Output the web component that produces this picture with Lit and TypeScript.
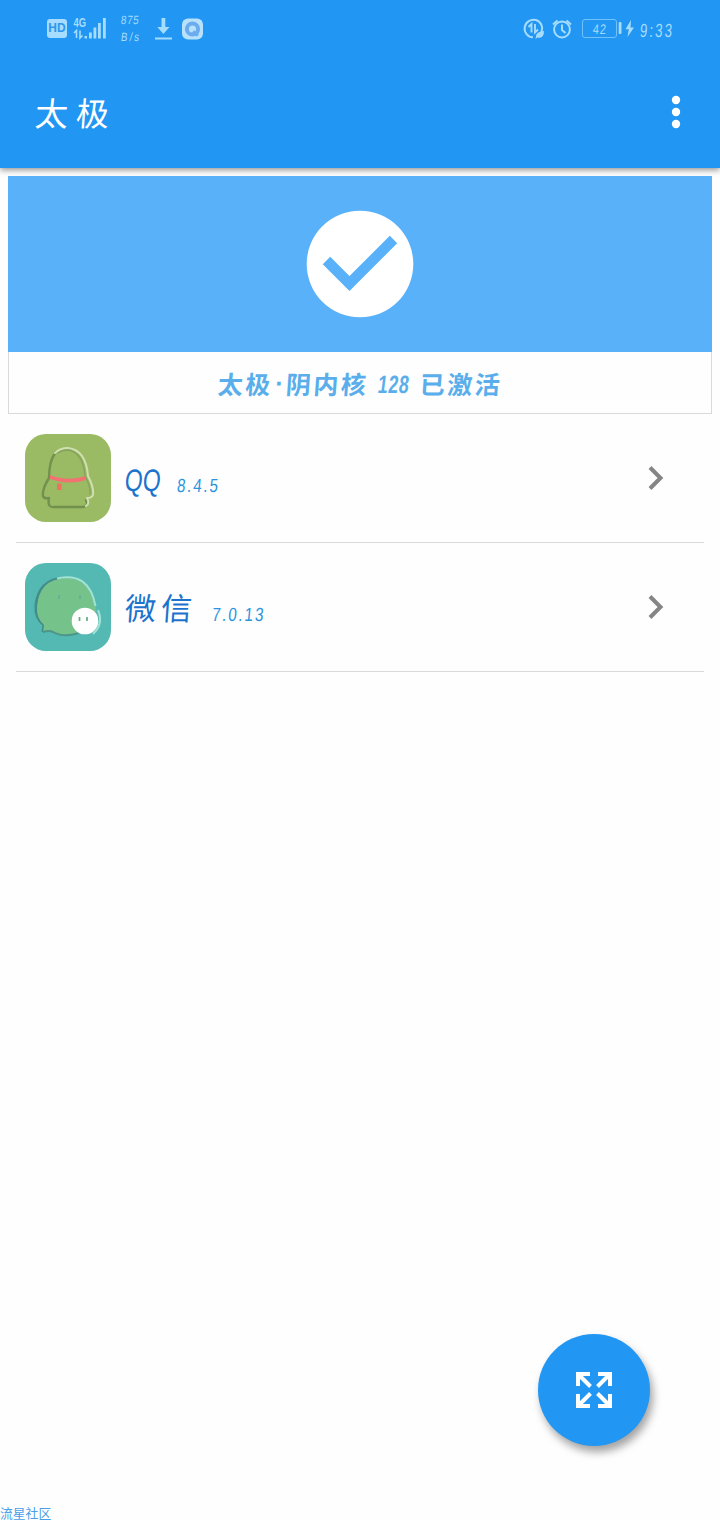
import { LitElement, html, css, svg } from "lit";
import { customElement, property } from "lit/decorators.js";

const cjk = css`"Liberation Sans", "Noto Sans CJK SC", sans-serif`;

@customElement("status-bar")
class StatusBar extends LitElement {
  static styles = css`
    :host { display: flex; justify-content: space-between; height: 56px; padding: 0 46px 0 47px;
      box-sizing: border-box; color: #a6dcfd; font-family: ${cjk}; }
    svg { display: block; flex: none; }
    .side { display: flex; align-items: flex-start; }
    .left { padding-top: 14px; }
    .right { padding-top: 16px; }
    .hd { width: 20px; height: 19px; margin: 5px 6px 0 0; border-radius: 3px; background: #a6dcfd; color: #2f97ee;
      display: flex; align-items: center; justify-content: center; font-size: 12px; font-weight: 700; line-height: 19px; }
    .gen { font-size: 12px; font-weight: 700; }
    .rate { width: 34px; box-sizing: border-box; padding-left: 14px; font-size: 12px; line-height: 17px;
      white-space: nowrap; margin-top: -2px; height: 34px; }
    .rate span { display: block; transform-origin: 0 50%; transform: scaleX(.82) skewX(-8deg); letter-spacing: .7px; }
    .rate span + span { letter-spacing: 2.4px; }
    .pct { width: 35px; height: 19px; margin: 3px 0 0 9px; box-sizing: border-box; border: 1.5px solid #72c2fa;
      border-radius: 3px; display: flex; align-items: center; justify-content: center; font-size: 14px; line-height: 16px; }
    .pct span { transform: scaleX(.78) skewX(-6deg); letter-spacing: 1px; }
    .time { width: 34px; margin-left: 5px; font-size: 19px; line-height: 29px; white-space: nowrap; }
    .time span { display: block; transform-origin: 0 50%; transform: scaleX(.7) skewX(-6deg); letter-spacing: 3px; }
  `;
  render() {
    return html`
      <div class="side left">
        <div class="hd">HD</div>
        <svg width="34" height="28" viewBox="26 0 34 28" fill="#a6dcfd">
          <text class="gen" x="26.500" y="12.500" textLength="12.500" lengthAdjust="spacingAndGlyphs">4G</text>
          <path fill="none" stroke="#a6dcfd" stroke-width="1.600" d="M27 19l2.500-2.500V24M33 16.500V24l2.500-2.500"/>
          <path d="M37.500 22h2.500v2.500h-2.500zM42 18.500h2.800v6H42zM46.500 13.500h2.800v11h-2.800zM51 9h2.800v15.500H51zM56 4h2.800v20.500H56z"/>
        </svg>
        <div class="rate"><span>875</span><span>B/s</span></div>
        <svg width="64" height="28" viewBox="0 0 64 28">
          <path fill="#a6dcfd" d="M20.500 4h3.800v9h4.200l-6.100 7-6.100-7h4.200zM14 23.500h17v2H14z"/>
          <rect x="41" y="4.500" width="21" height="21" rx="6" fill="#b8e2fc"/>
          <circle cx="51.500" cy="15" r="5.600" fill="none" stroke="#6bacee" stroke-width="4"/>
          <path d="M52 17.500l5 4" stroke="#6bacee" stroke-width="3"/>
        </svg>
      </div>
      <div class="side right">
        <svg width="50" height="26" viewBox="0 0 50 26" fill="none" stroke="#a6dcfd" stroke-width="2">
          <path d="M18.500 16A8.800 8.800 0 1 0 10 21.300"/>
          <path stroke-width="1.900" d="M5.500 11l3-3v8.500M12 8v8.500l3-3"/>
          <path fill="#a6dcfd" stroke="none" d="M13 20.500q0-5 8-5.500 0 8-6.500 6.500l-2 1.500z"/>
          <circle cx="39" cy="13.500" r="7.900"/>
          <path d="M39 8.500v5.500l3.500 3M30 8.500l4.500-4M48 8.500l-4.500-4"/>
        </svg>
        <div class="pct"><span>42</span></div>
        <svg width="18" height="26" viewBox="0 0 18 26" fill="#a6dcfd">
          <rect x="1.700" y="6" width="2.800" height="12" rx="1"/>
          <path d="M14 4L8.500 13.200h3.300L10.500 21 17 11.500h-3.500z"/>
        </svg>
        <div class="time"><span>9:33</span></div>
      </div>`;
  }
}

@customElement("app-row")
class AppRow extends LitElement {
  @property() name = "";
  @property() version = "";
  @property() icon = "";
  static styles = css`
    :host { display: flex; align-items: center; height: 129px; margin: 0 16px; padding: 0 37px 0 9px;
      box-sizing: border-box; border-bottom: 1px solid #dadada; font-family: ${cjk}; }
    svg { display: block; flex: none; }
    .soft { filter: blur(.6px); }
    .name { margin-left: 14px; white-space: nowrap; color: #1c73cd; height: 40px; line-height: 40px; }
    .latin { width: 52px; font-size: 31px; margin-top: 6px; }
    .hanzi { width: 87px; font-size: 31px; letter-spacing: 5px; font-weight: 400; margin-top: 5px; }
    .name span, .version span { display: inline-block; transform-origin: 0 50%; }
    .latin span { transform: scaleX(.74) skewX(-7deg); }
    .hanzi span { transform: skewX(-4deg); }
    .version { flex: 1; font-size: 19px; line-height: 24px; color: #2a94e0; margin-top: 15px; white-space: nowrap; }
    .version span { transform: scaleX(.8) skewX(-7deg); letter-spacing: 2.3px; }
  `;
  qq() {
    return svg`
      <rect width="86" height="88" rx="21" fill="#9aba64"/>
      <g class="soft" fill="none" stroke-linecap="round" stroke-linejoin="round">
        <path d="M31 18Q24 26 24 44Q17 55 18 62Q19 65 24 64Q22 74 29 73H57Q64 73 61 66" stroke="#71914e" stroke-width="2.400"/>
        <path d="M30 19Q35 14 43 14Q61 16 63 42Q69 53 68 61Q67 64 62 64Q65 70 61 72" stroke="#cfdfaf" stroke-width="2"/>
        <path d="M33 19Q37 16 43 16Q58 18 60 42Q66 53 65 60" stroke="#84a25e" stroke-width="1.300"/>
      </g>
      <path d="M25 41Q43 48 61 42V46Q43 51.500 25 45z" fill="#f27171"/>
      <path d="M32 49.500h4.500v6.500h-4.500z" fill="#ee7164"/>`;
  }
  wechat() {
    return svg`
      <rect width="86" height="88" rx="21" fill="#54b9b2"/>
      <path class="soft" d="M18 69L19 62Q10 55 11 42Q14 17 38 15" fill="none" stroke="#438c88" stroke-width="3"/>
      <path d="M18 69L19 62Q11 55 12 44Q14 16 41 15Q69 16 71 46Q69 72 41 72Q31 73 28 69Q23 68 18 69z" fill="#75c28a"/>
      <g class="soft" fill="none">
        <path d="M18 69Q24 67 28 69Q38 75 54 70" stroke="#4c958a" stroke-width="2"/>
        <path d="M32 15.500Q64 8 70.500 43" stroke="#a0e2d6" stroke-width="2"/>
        <path d="M73 47Q79 61 68 71" stroke="#a0e2d6" stroke-width="2"/>
      </g>
      <circle cx="60" cy="58" r="13.300" fill="#fff"/>
      <path d="M54.500 54v4M62 54v4" stroke="#5fae80" stroke-width="1.700"/>
      <path d="M34 32v4M55 32v4" stroke="#60af92" stroke-width="1.500"/>`;
  }
  render() {
    return html`
      <svg width="86" height="88" viewBox="0 0 86 88">${this.icon === "qq" ? this.qq() : this.wechat()}</svg>
      <div class="name ${this.icon === "qq" ? "latin" : "hanzi"}"><span>${this.name}</span></div>
      <div class="version"><span>${this.version}</span></div>
      <svg width="20" height="28" viewBox="0 0 20 28"><path d="M3 3.500L13.500 14 3 24.500" fill="none" stroke="#858585" stroke-width="4"/></svg>`;
  }
}

@customElement("app-root")
class AppRoot extends LitElement {
  static styles = css`
    :host { display: flex; flex-direction: column; position: relative; width: 720px; height: 1520px;
      overflow: hidden; background: #fefefe; font-family: ${cjk}; }
    svg { display: block; }
    header { flex: none; height: 168px; background: #2196f3; box-shadow: 0 2px 6px rgba(0,0,0,.42); }
    .toolbar { display: flex; height: 112px; align-items: center; justify-content: space-between; padding: 0 38px 0 35px; }
    .title { color: #fff; font-size: 33px; letter-spacing: 8px; font-weight: 400; line-height: 40px; margin-top: 5px; }
    .title span { display: inline-block; transform: skewX(-4deg); }
    .card { flex: none; margin: 8px 8px 0; height: 238px; box-sizing: border-box; display: flex; flex-direction: column; }
    .banner { height: 176px; background: #59b1f9; display: flex; align-items: center; justify-content: center; }
    .state { flex: 1; display: flex; justify-content: center; align-items: center; box-sizing: border-box;
      border: 1px solid #d9d9d9; border-top: 0; color: #5aaeeb; font-weight: 700; font-size: 25px;
      letter-spacing: 2.500px; white-space: pre; }
    .state span { display: block; transform: skewX(-4deg); margin-top: 1px; }
    .state .dot { width: 13px; letter-spacing: 0; text-align: center; }
    .state .num { width: 32px; margin: 3px 10px 0 9px; letter-spacing: 1px; transform-origin: 0 50%; transform: scaleX(.71) skewX(-10deg); }
    .fab { position: absolute; left: 538px; top: 1334px; width: 112px; height: 112px; border-radius: 50%;
      background: #2196f3; display: flex; align-items: center; justify-content: center; box-shadow: 3px 6px 9px rgba(0,0,0,.36); }
    .mark { margin-top: auto; font-size: 12.800px; line-height: 13px; height: 13px; color: #4a9fe8; }
  `;
  render() {
    return html`
      <header>
        <status-bar></status-bar>
        <div class="toolbar">
          <div class="title"><span>太极</span></div>
          <svg width="12" height="34" viewBox="0 0 12 34" fill="#fff">
            <circle cx="6" cy="5" r="4.200"/><circle cx="6" cy="17" r="4.200"/><circle cx="6" cy="29" r="4.200"/>
          </svg>
        </div>
      </header>
      <section class="card">
        <div class="banner">
          <svg width="108" height="108" viewBox="0 0 108 108">
            <circle cx="54" cy="54" r="53.300" fill="#fff"/>
            <path d="M20.500 50.500l23 23L87.500 29.500" fill="none" stroke="#59b1f9" stroke-width="10.500"/>
          </svg>
        </div>
        <div class="state"><span>太极</span><span class="dot">·</span><span>阴内核</span><span class="num">128</span><span>已激活</span></div>
      </section>
      <app-row icon="qq" name="QQ" version="8.4.5"></app-row>
      <app-row icon="wechat" name="微信" version="7.0.13"></app-row>
      <div class="mark">流星社区</div>
      <div class="fab">
        <svg width="36" height="36" viewBox="0 0 36 36" fill="none" stroke="#fff" stroke-width="4">
          <path d="M14 2H2v12M2 2l12.500 12.500M22 2h12v12M34 2L21.500 14.500M2 22v12h12M2 34l12.500-12.500M34 22v12H22M34 34L21.500 21.500"/>
        </svg>
      </div>`;
  }
}
